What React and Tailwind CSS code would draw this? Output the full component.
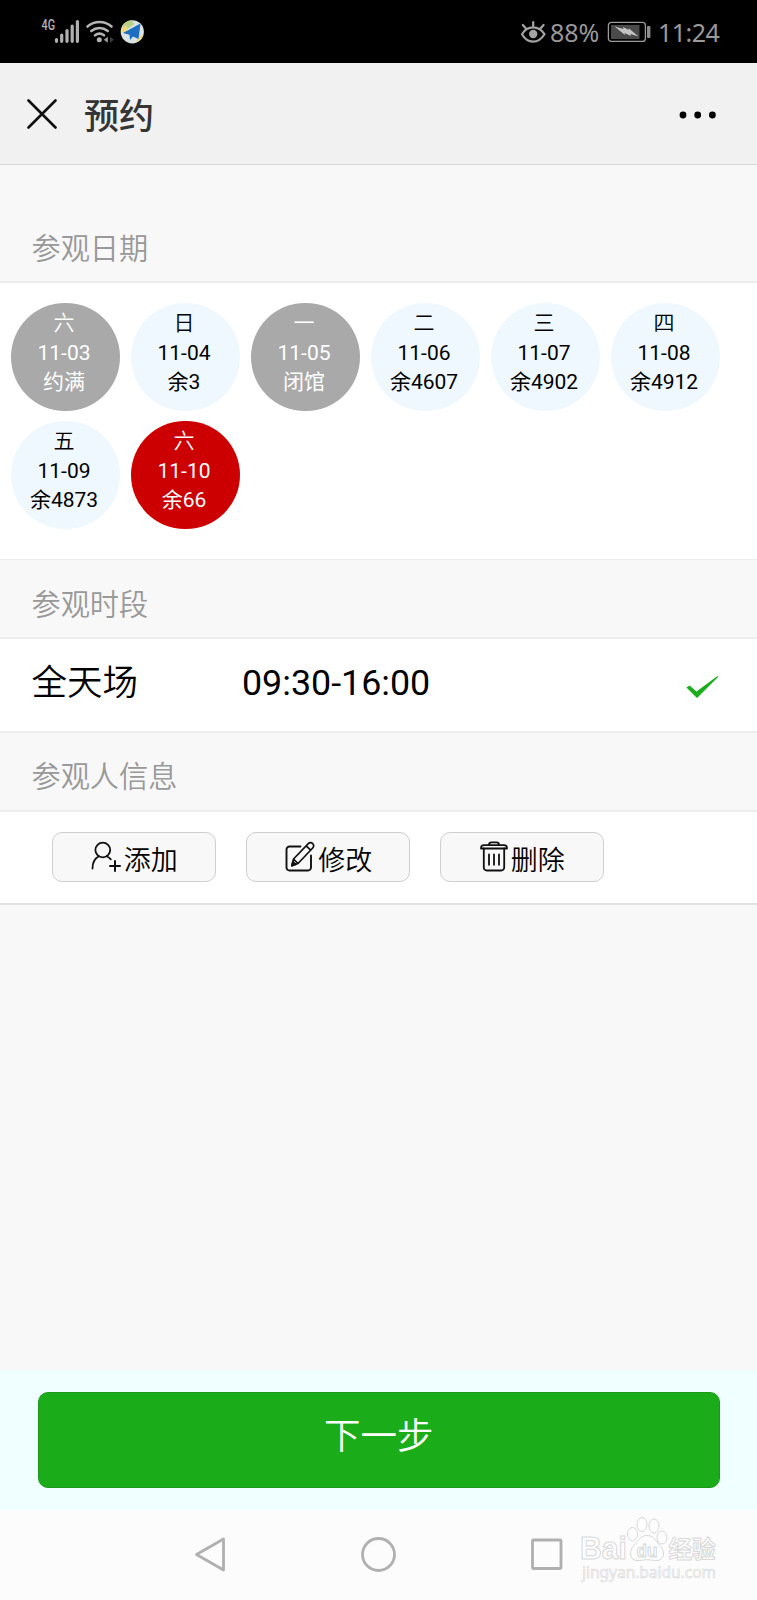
const days = [
  { week: "六", date: "11-03", note: "约满", tone: "bg-[#a9a9a9] text-white" },
  { week: "日", date: "11-04", note: "余3", tone: "bg-[#f0f8ff] text-black" },
  { week: "一", date: "11-05", note: "闭馆", tone: "bg-[#a9a9a9] text-white" },
  { week: "二", date: "11-06", note: "余4607", tone: "bg-[#f0f8ff] text-black" },
  { week: "三", date: "11-07", note: "余4902", tone: "bg-[#f0f8ff] text-black" },
  { week: "四", date: "11-08", note: "余4912", tone: "bg-[#f0f8ff] text-black" },
  { week: "五", date: "11-09", note: "余4873", tone: "bg-[#f0f8ff] text-black" },
  { week: "六", date: "11-10", note: "余66", tone: "bg-[#cc0000] text-white" },
];

function StatusBar() {
  return (
    <div className="flex h-[63px] shrink-0 items-center justify-between bg-black pl-[41px] pr-[37px]">
      <svg width="104" height="38" viewBox="41 13 104 38" fill="none">
        <text x="41.5" y="30" fontSize="14" fontWeight="500" fill="#b4b4b4" fontFamily="Roboto, sans-serif" textLength="13.5" lengthAdjust="spacingAndGlyphs">4G</text>
        <g stroke="#b0b0b0" strokeWidth="3.2" strokeLinecap="round">
          <path d="M56.5 39.5v1.8M61.7 35v6.3M67 30.5v10.8M72.2 26v15.3M77.4 21.5v19.8" />
        </g>
        <g stroke="#b4b4b4" strokeWidth="2.6" strokeLinecap="round">
          <path d="M87.5 26.5c7-6 17-6 24 0M91.3 31c5-4 11.500-4 16.500 0M95 35.300c3-2.200 6-2.200 9 0" />
        </g>
        <circle cx="99.300" cy="39.800" r="2.500" fill="#b4b4b4" />
        <path d="M103.800 39.700l4-3v6z" fill="#a0a0a0" />
        <path d="M114 39.700l-4-3v6z" fill="#3c3c3c" />
        <circle cx="132.300" cy="31.800" r="11.600" fill="#d9e2e4" />
        <path d="M122 26.500a11.600 11.600 0 0 1 10-6.200l2 4-7 5z" fill="#b7cf86" />
        <path d="M121 30l4-5 3 3-4 6z" fill="#ecd77a" />
        <path d="M136 41l5-6 2.500 0a11.600 11.600 0 0 1-5.500 6.500z" fill="#ecd77a" />
        <path d="M140.500 23.500L123 33l6.500 1.800.5 5.200 3-3.500 5.500 2.500z" fill="#1c6fc0" />
      </svg>
      <div className="flex items-center font-['Noto_Sans',sans-serif] text-[25px] leading-[30px] text-[#999999]">
        <svg width="27" height="24" viewBox="0 0 27 24" fill="none" stroke="#a3a3a3" strokeWidth="2.200" strokeLinecap="round">
          <path d="M2 14.200C7.500 5.200 18.500 5.200 24.500 14.200 18.500 24 7.500 24 2 14.200z" />
          <path d="M13.200 2v4M2.800 5l3.200 3.600M23.600 5l-3.200 3.600" />
          <circle cx="13.200" cy="14" r="4.200" fill="#a3a3a3" stroke="none" />
        </svg>
        <span className="ml-[3px] w-[51px]">88%</span>
        <svg className="ml-[6px]" width="44" height="22" viewBox="0 0 44 22">
          <rect x="1.400" y="1.400" width="37" height="19" rx="3" fill="none" stroke="#9a9a9a" strokeWidth="1.300" />
          <rect x="4" y="4" width="28.500" height="14" fill="#4a4a4a" />
          <path d="M7.500 5.500l9 2.500-.5-2 6 3-.5-2L31.500 15.500l-8-2.500.5 2-6.500-3 .5 2z" fill="#c4c4c4" />
          <rect x="40" y="5" width="3.400" height="12" rx="1" fill="#8d8d8d" />
        </svg>
        <span className="ml-[7px] w-[62px] whitespace-nowrap tracking-[-0.5px]">11:24</span>
      </div>
    </div>
  );
}

function SectionTitle({ children, className }) {
  return (
    <div className={`flex shrink-0 items-end border-b-2 border-[#ededed] pl-[31.500px] text-[29.200px] font-[350] leading-[34px] text-[#999999] ${className}`}>
      {children}
    </div>
  );
}

function UserPlusIcon() {
  return (
    <svg width="30" height="32" viewBox="0 0 30 32" fill="none" stroke="#111" strokeWidth="1.800" strokeLinecap="round">
      <circle cx="11.800" cy="9" r="7.400" />
      <path d="M1.500 27.500C1.500 21 3.800 17.500 7.800 15.300M15.800 15.300c1.600.7 3 1.800 4 3.100" />
      <path d="M19 25h10M24 20v10" strokeWidth="2" />
    </svg>
  );
}

function EditIcon() {
  return (
    <svg width="31" height="32" viewBox="0 0 31 32" fill="none" stroke="#111" strokeWidth="1.900" strokeLinecap="round" strokeLinejoin="round">
      <path d="M15.500 5.500H4.500A3 3 0 0 0 1.500 8.500v18a3 3 0 0 0 3 3h18.500a3 3 0 0 0 3-3V14.500" />
      <path d="M6.800 24.800l1.700-6.800L23.300 2.600a3 3 0 0 1 4.400 0 3 3 0 0 1 0 4.400L13 22.500zM8.500 18l4.500 4.500M21.200 4.800l4.500 4.300" strokeWidth="1.700" />
      <path d="M7 24.500l1-3.500 2.500 2.300z" fill="#111" />
    </svg>
  );
}

function TrashIcon() {
  return (
    <svg width="28" height="32" viewBox="0 0 28 32" fill="none" stroke="#111" strokeWidth="1.800" strokeLinecap="round" strokeLinejoin="round">
      <path d="M9 4c0-2 .8-2.600 2.500-2.600h5C18.200 1.400 19 2 19 4" />
      <path d="M1 7.500C1 5 2 4.200 4 4.200h20c2 0 3 .8 3 3.300z" />
      <path d="M3.800 7.500v19a3 3 0 0 0 3 3h14.400a3 3 0 0 0 3-3v-19M9 13.500v10.300M14 13.500v10.300M19 13.500v10.300" />
    </svg>
  );
}

function ActionButton({ icon, label }) {
  return (
    <button className="flex h-[50px] w-[164px] items-center justify-center rounded-[10px] border border-[#cfcfcf] bg-[#f8f8f8] pl-[1px] text-[27px] font-[350] leading-[34px] text-black">
      {icon}
      <span className="ml-[2.500px] mt-[7px]">{label}</span>
    </button>
  );
}

function Watermark() {
  return (
    <svg className="absolute right-[33px] bottom-[15px]" width="145" height="70" viewBox="0 0 145 70" fill="#fdfdfd" stroke="#d8d8d8" strokeWidth="1">
      <g fontFamily="'Liberation Sans', sans-serif" fontWeight="700">
        <text x="1" y="44" fontSize="32" textLength="47" lengthAdjust="spacingAndGlyphs">Bai</text>
        <ellipse cx="53.500" cy="19" rx="5" ry="6.500" />
        <ellipse cx="63" cy="9.500" rx="5" ry="7" />
        <ellipse cx="75" cy="11" rx="5" ry="7" />
        <ellipse cx="83" cy="22.500" rx="5" ry="6.500" />
        <path d="M68 20.500c-7 0-9 6-13 10-6 6-4 15 3 15 4 0 7-.8 10-.8s6 .8 10 .8c7 0 9-9 3-15-4-4-6-10-13-10z" />
        <text x="57.500" y="41.500" fontSize="18" fontWeight="700" textLength="21" lengthAdjust="spacingAndGlyphs">du</text>
      </g>
      <text x="89.500" y="42.500" fontSize="24" fontWeight="700" fontFamily="'Noto Sans CJK SC', sans-serif" textLength="47" lengthAdjust="spacingAndGlyphs">经验</text>
      <text x="3" y="62.500" fontSize="15.500" fontFamily="'Noto Sans', sans-serif" strokeWidth="0.600" textLength="134" lengthAdjust="spacingAndGlyphs">jingyan.baidu.com</text>
    </svg>
  );
}

export default function App() {
  return (
    <div className="relative flex h-[1600px] w-[757px] flex-col overflow-hidden bg-[#f8f8f8] font-[Roboto,'Noto_Sans_CJK_SC',sans-serif] text-black">
      <StatusBar />
      <header className="flex h-[102px] shrink-0 items-center border-b border-[#d6d6d6] bg-[#f1f1f1] pl-[27px] pr-[40px]">
        <svg width="30" height="30" viewBox="0 0 30 30" fill="none" stroke="#111" strokeWidth="2.600" strokeLinecap="round">
          <path d="M1.500 1.500l27 27M28.500 1.500l-27 27" />
        </svg>
        <h1 className="ml-[27px] mt-[9px] text-[35px] font-medium leading-[44px] text-[#353535]">预约</h1>
        <svg className="ml-auto mt-[2px]" width="38" height="8" viewBox="0 0 38 8">
          <circle cx="4" cy="4" r="3.400" />
          <circle cx="18.700" cy="4" r="3.400" />
          <circle cx="33.400" cy="4" r="3.400" />
        </svg>
      </header>

      <SectionTitle className="h-[118px] pb-[15px]">参观日期</SectionTitle>
      <section className="grid h-[276px] shrink-0 grid-cols-[repeat(6,109px)] content-start gap-x-[11px] gap-y-[10px] bg-white pl-[10.500px] pt-[20px]">
        {days.map((day) => (
          <button key={day.date} className={`flex h-[108px] flex-col items-center rounded-full pr-[2px] pt-[6px] text-[21px] leading-[29.500px] ${day.tone}`}>
            <span className="font-[350]">{day.week}</span>
            <span>{day.date}</span>
            <span>{day.note}</span>
          </button>
        ))}
      </section>

      <SectionTitle className="h-[80px] border-t pb-[15px]">参观时段</SectionTitle>
      <section className="flex h-[92px] shrink-0 items-center bg-white pl-[31.500px] pr-[38px] pb-[6px]">
        <span className="mt-[2px] w-[210.500px] text-[35.500px] font-[350] leading-[46px]">全天场</span>
        <span className="mt-[2px] text-[35.800px] leading-[46px]">09:30-16:00</span>
        <svg className="ml-auto mt-[9px]" width="33" height="24" viewBox="0 0 33 24">
          <path d="M0.500 12.500l3-2 7 6L31.500 1l.8.800L11 23z" fill="#1aad19" />
        </svg>
      </section>

      <SectionTitle className="h-[81px] border-t-2 pb-[16px]">参观人信息</SectionTitle>
      <section className="flex h-[93px] shrink-0 gap-[30px] border-b-2 border-[#e2e2e2] bg-white pl-[52px] pt-[20px]">
        <ActionButton icon={<UserPlusIcon />} label="添加" />
        <ActionButton icon={<EditIcon />} label="修改" />
        <ActionButton icon={<TrashIcon />} label="删除" />
      </section>

      <footer className="mt-auto shrink-0">
        <div className="h-[140px] bg-[#f0ffff] pl-[37.500px] pr-[37px] pt-[21.500px]">
          <button className="flex h-[96.500px] w-full items-center justify-center rounded-[10px] border border-[#1b9a1a] bg-[#1aad19] pb-[6px] text-[36.500px] font-[350] leading-[48px] text-white">
            下一步
          </button>
        </div>
        <nav className="flex h-[90px] items-center bg-[#fcfcfc] pb-[2px] pl-[194px]">
          <svg width="32" height="36" viewBox="0 0 32 36" fill="none" stroke="#b0b0b0" strokeWidth="2.800" strokeLinejoin="round">
            <path d="M2.500 18.500L29.500 3v31z" />
          </svg>
          <svg className="ml-[135px]" width="36" height="36" viewBox="0 0 36 36" fill="none" stroke="#b0b0b0" strokeWidth="2.800">
            <circle cx="17.500" cy="18.500" r="16" />
          </svg>
          <svg className="ml-[134px]" width="32" height="36" viewBox="0 0 32 36" fill="none" stroke="#b0b0b0" strokeWidth="2.800" strokeLinejoin="round">
            <rect x="1.500" y="4" width="28.500" height="28.500" rx="1" />
          </svg>
        </nav>
      </footer>
      <Watermark />
    </div>
  );
}
